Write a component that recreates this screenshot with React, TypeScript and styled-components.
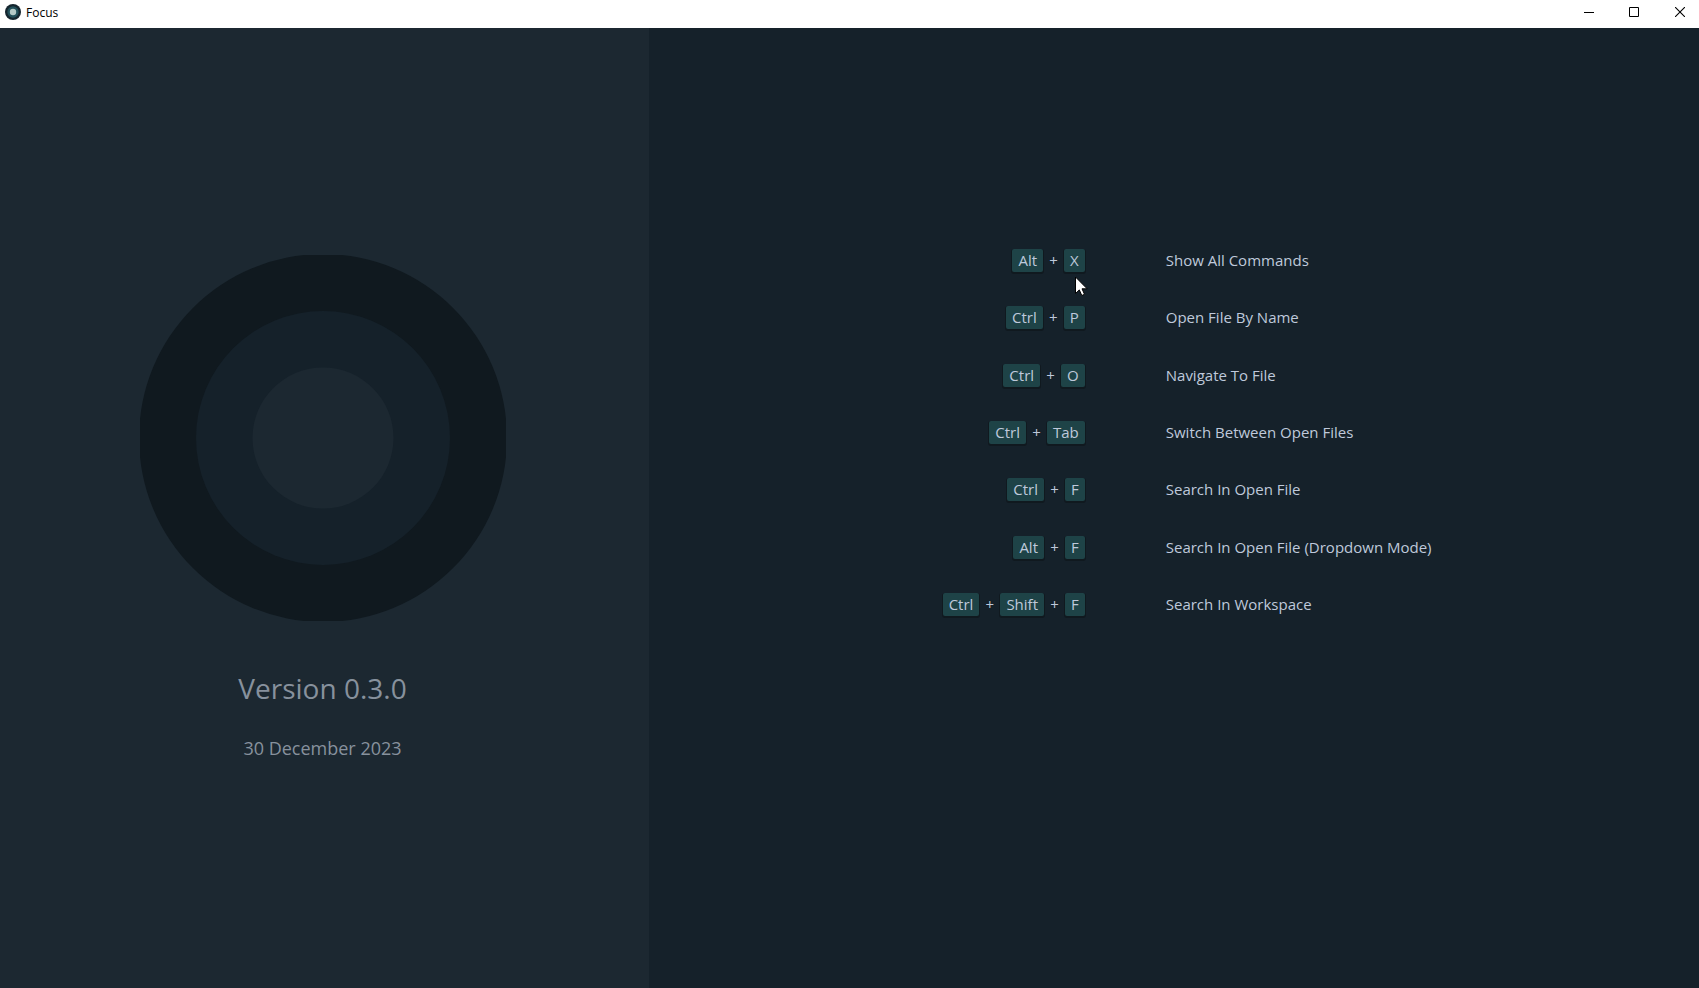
import React from "react";
import styled, { createGlobalStyle } from "styled-components";

const palette = {
  panel: "#1c2831",
  background: "#15212a",
  ring: "#10191f",
  key: "#1e4347",
  text: "#bfc9db",
  dim: "#87919d",
};

const GlobalStyle = createGlobalStyle`
  * { box-sizing: border-box; }
  body {
    margin: 0;
    background: ${palette.background};
    font-family: "Open Sans", "Noto Sans", sans-serif;
  }
`;

const Window = styled.div`
  display: flex;
  flex-direction: column;
  min-height: 100vh;
`;

const TitleBar = styled.header`
  display: flex;
  align-items: center;
  flex: none;
  height: 28px;
  padding: 0 0 4px 5px;
  background: #fff;
  color: #000;
`;

const Title = styled.span`
  flex: 1;
  padding-top: 2px;
  margin-left: 5px;
  font-size: 12px;
  line-height: 16px;
`;

const WindowControls = styled.div`
  display: flex;
  gap: 8px;
`;

const ControlButton = styled.button`
  display: flex;
  align-items: center;
  justify-content: center;
  width: 38px;
  height: 24px;
  padding: 0;
  border: 0;
  background: transparent;
  color: #000;
`;

const Content = styled.main`
  display: grid;
  grid-template-columns: 38.2% 1fr;
  flex: 1;
`;

const AboutPanel = styled.section`
  display: flex;
  flex-direction: column;
  align-items: center;
  padding: 227px 4px 0 0;
  background: ${palette.panel};
  color: ${palette.dim};
`;

const Logo = styled.svg`
  display: block;
  width: 366px;
  height: 366px;
`;

const Version = styled.h1`
  margin: 48px 0 0;
  font-size: 28px;
  font-weight: 400;
  line-height: 38px;
`;

const ReleaseDate = styled.p`
  margin: 28px 0 0;
  font-size: 18px;
  line-height: 26px;
`;

const ShortcutPanel = styled.section`
  padding-top: 221px;
  background: ${palette.background};
  color: ${palette.text};
`;

const ShortcutList = styled.dl`
  display: flex;
  flex-direction: column;
  justify-content: space-between;
  height: 367px;
  margin: 0;
  font-size: 15px;
  line-height: 23px;
`;

const ShortcutRow = styled.div`
  display: grid;
  grid-template-columns: 41.5% 1fr;
  column-gap: 81px;
`;

const Keys = styled.dt`
  position: relative;
  display: flex;
  justify-content: flex-end;
`;

const Key = styled.kbd`
  height: 23px;
  padding: 0 6px;
  border-radius: 2px;
  background: ${palette.key};
  box-shadow: 0 1px 0 1px ${palette.ring};
  font-family: inherit;
  font-size: 15px;
`;

const Plus = styled.span`
  width: 21px;
  text-align: center;
`;

const Description = styled.dd`
  margin: 0;
`;

const Pointer = styled.svg`
  position: absolute;
  top: 27px;
  right: -3px;
  width: 13px;
  height: 21px;
`;

const shortcuts = [
  { keys: ["Alt", "X"], label: "Show All Commands", hovered: true },
  { keys: ["Ctrl", "P"], label: "Open File By Name" },
  { keys: ["Ctrl", "O"], label: "Navigate To File" },
  { keys: ["Ctrl", "Tab"], label: "Switch Between Open Files" },
  { keys: ["Ctrl", "F"], label: "Search In Open File" },
  { keys: ["Alt", "F"], label: "Search In Open File (Dropdown Mode)" },
  { keys: ["Ctrl", "Shift", "F"], label: "Search In Workspace" },
];

function AppIcon() {
  return (
    <svg width="16" height="16" viewBox="0 0 16 16" aria-hidden="true">
      <circle cx="8" cy="8" r="8" fill="#15252e" />
      <circle cx="8" cy="8" r="5.7" fill="#22505a" />
      <circle cx="8" cy="8" r="3.2" fill="#b4c9c6" />
    </svg>
  );
}

export default function App() {
  return (
    <Window>
      <GlobalStyle />
      <TitleBar>
        <AppIcon />
        <Title>Focus</Title>
        <WindowControls>
          <ControlButton aria-label="Minimize">
            <svg width="12" height="10" viewBox="0 0 12 10">
              <path d="M2 5.5H12" stroke="currentColor" />
            </svg>
          </ControlButton>
          <ControlButton aria-label="Maximize">
            <svg width="10" height="10" viewBox="0 0 10 10">
              <path d="M.5 .5H9.5V9.5H.5Z" fill="none" stroke="currentColor" />
            </svg>
          </ControlButton>
          <ControlButton aria-label="Close">
            <svg width="10" height="10" viewBox="0 0 10 10">
              <path d="M0 0L10 10M10 0L0 10" stroke="currentColor" strokeWidth="1.1" />
            </svg>
          </ControlButton>
        </WindowControls>
      </TitleBar>
      <Content>
        <AboutPanel>
          <Logo viewBox="0 0 366 366" aria-hidden="true">
            <circle cx="183" cy="183" r="184" fill={palette.ring} />
            <circle cx="183" cy="183" r="127" fill={palette.background} />
            <circle cx="183" cy="183" r="70.5" fill={palette.panel} />
          </Logo>
          <Version>Version 0.3.0</Version>
          <ReleaseDate>30 December 2023</ReleaseDate>
        </AboutPanel>
        <ShortcutPanel>
          <ShortcutList>
            {shortcuts.map(({ keys, label, hovered }) => (
              <ShortcutRow key={label}>
                <Keys>
                  {keys.map((name, index) => (
                    <React.Fragment key={name}>
                      {index > 0 && <Plus>+</Plus>}
                      <Key>{name}</Key>
                    </React.Fragment>
                  ))}
                  {hovered && (
                    <Pointer viewBox="0 0 13 21" aria-hidden="true">
                      <path
                        d="M.5 1V17.5L4.3 13.9L6.8 19.5L9.5 18.3L7 12.8H12.2Z"
                        fill="#fff"
                        stroke="#000"
                      />
                    </Pointer>
                  )}
                </Keys>
                <Description>{label}</Description>
              </ShortcutRow>
            ))}
          </ShortcutList>
        </ShortcutPanel>
      </Content>
    </Window>
  );
}
